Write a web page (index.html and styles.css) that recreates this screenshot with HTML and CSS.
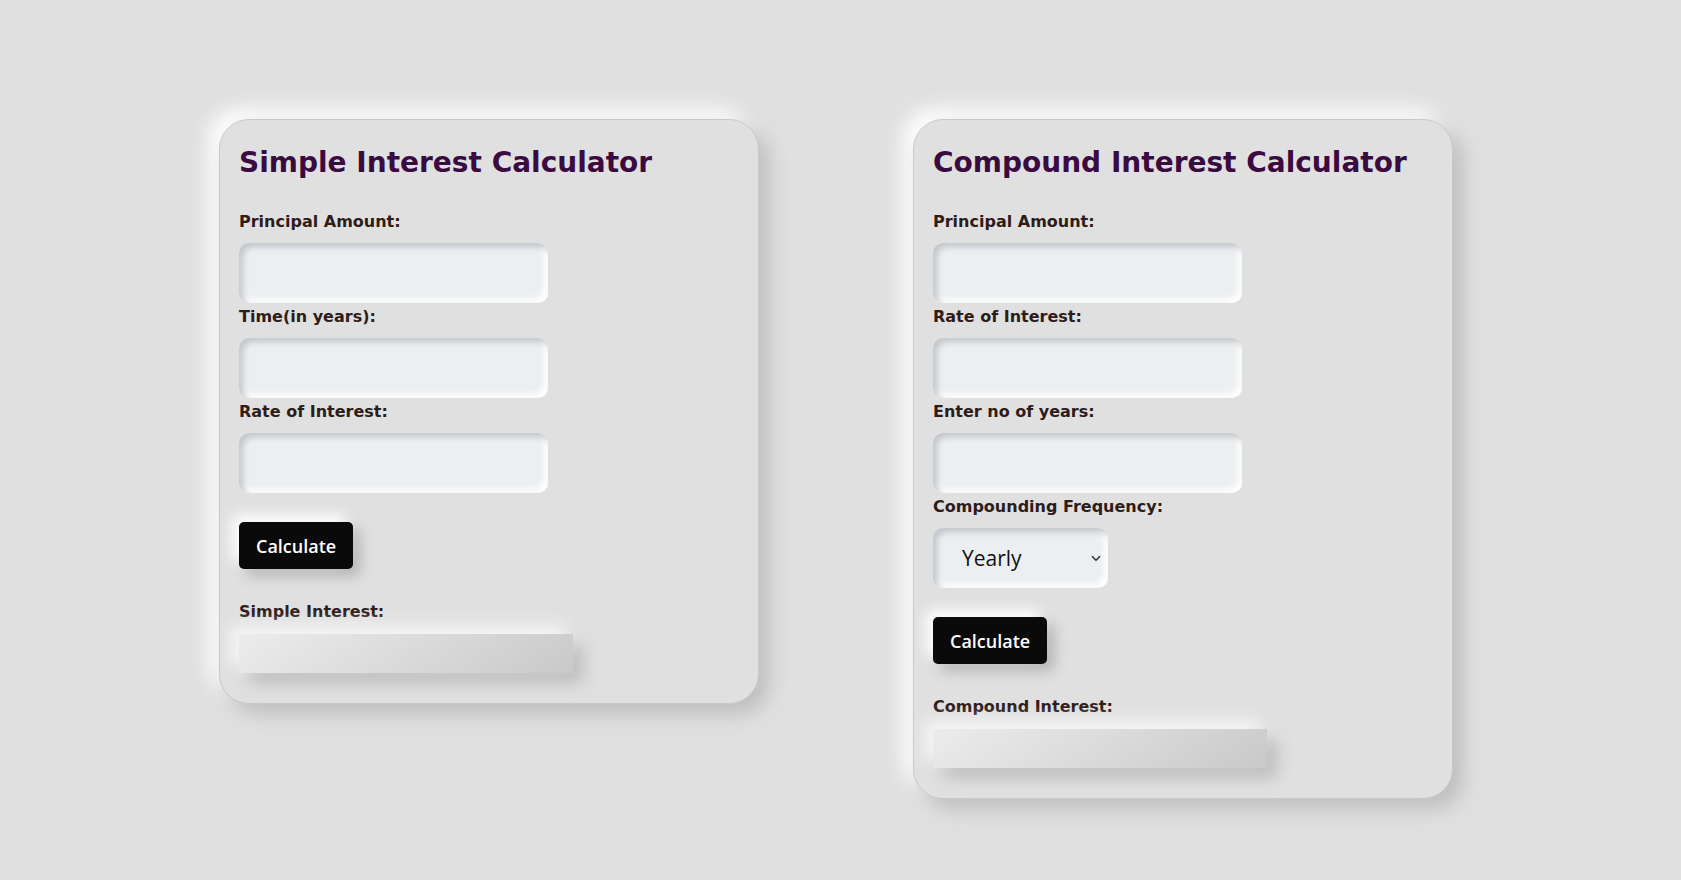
FILE: index.html
```html
<!DOCTYPE html>
<html lang="en">
<head>
<meta charset="utf-8">
<title>Interest Calculators</title>
<link rel="stylesheet" href="styles.css">
</head>
<body>
<main class="page">
  <section class="card">
    <h2 class="card-title">Simple Interest Calculator</h2>
    <label class="field-label" for="si-p">Principal Amount:</label>
    <input class="field-input" id="si-p" type="text">
    <label class="field-label" for="si-t">Time(in years):</label>
    <input class="field-input" id="si-t" type="text">
    <label class="field-label" for="si-r">Rate of Interest:</label>
    <input class="field-input" id="si-r" type="text">
    <button class="calc-btn" type="button">Calculate</button>
    <div class="result-label">Simple Interest:</div>
    <div class="result-box"></div>
  </section>

  <section class="card">
    <h2 class="card-title">Compound Interest Calculator</h2>
    <label class="field-label" for="ci-p">Principal Amount:</label>
    <input class="field-input" id="ci-p" type="text">
    <label class="field-label" for="ci-r">Rate of Interest:</label>
    <input class="field-input" id="ci-r" type="text">
    <label class="field-label" for="ci-n">Enter no of years:</label>
    <input class="field-input" id="ci-n" type="text">
    <label class="field-label" for="ci-f">Compounding Frequency:</label>
    <div class="select-wrap">
      <select class="field-select" id="ci-f">
        <option>Yearly</option>
        <option>Half-Yearly</option>
        <option>Quarterly</option>
        <option>Monthly</option>
      </select>
      <svg class="select-arrow" width="10" height="7" viewBox="0 0 10 7"><path d="M1 1.2 L5 5.2 L9 1.2" fill="none" stroke="#333" stroke-width="1.6"/></svg>
    </div>
    <button class="calc-btn" type="button">Calculate</button>
    <div class="result-label">Compound Interest:</div>
    <div class="result-box"></div>
  </section>
</main>
</body>
</html>
```

FILE: styles.css
```css
html, body {
  margin: 0;
  padding: 0;
  background: #e0e0e0;
}

body {
  font-family: "DejaVu Sans", sans-serif;
  min-height: 100vh;
}

.page {
  display: flex;
  align-items: flex-start;
  gap: 154px;
  padding: 119px 0 60px 219px;
  box-sizing: border-box;
}

.card {
  width: 540px;
  box-sizing: border-box;
  background: #e0e0e0;
  border: 1px solid #c9c9c9;
  border-radius: 30px;
  padding: 26px 20px 30px 19px;
  box-shadow: 10px 10px 20px #bebebe, -10px -10px 20px #ffffff;
  display: flex;
  flex-direction: column;
  align-items: flex-start;
}

.card-title {
  margin: 0 0 32px 0;
  font-size: 28px;
  line-height: 34px;
  font-weight: bold;
  color: #3a0b40;
}

.field-label,
.result-label {
  display: block;
  font-size: 16px;
  line-height: 19px;
  font-weight: bold;
  color: #2e1c18;
}

.field-input,
.field-select {
  display: block;
  box-sizing: border-box;
  height: 60px;
  border: none;
  outline: none;
  border-radius: 10px;
  background: #eceff1;
  box-shadow: inset 4px 4px 6px #c3c6ca, inset -4px -4px 6px #ffffff;
}

.field-input {
  width: 309px;
  margin: 12px 0 4px 0;
  padding: 0 16px;
  font-size: 18px;
}

.select-wrap {
  position: relative;
  margin: 12px 0 0 0;
}

.field-select {
  width: 175px;
  -webkit-appearance: none;
  appearance: none;
  padding: 0 0 0 29px;
  font-family: "Open Sans", "Noto Sans", sans-serif;
  font-size: 21px;
  color: #111;
}

.select-arrow {
  position: absolute;
  right: 7px;
  top: 27px;
  pointer-events: none;
}

.calc-btn {
  margin-top: 25px;
  height: 47px;
  padding: 0 17px;
  border: none;
  border-radius: 5px;
  background: #0a0a0a;
  color: #ffffff;
  font-family: "Open Sans", "Noto Sans", sans-serif;
  font-size: 18px;
  font-weight: 600;
  box-shadow: -7px -7px 14px #ffffff, 7px 7px 14px #b3b3b3;
}

.select-wrap + .calc-btn {
  margin-top: 29px;
}

.result-label {
  margin-top: 33px;
}

.result-box {
  margin-top: 13px;
  width: 334px;
  height: 39px;
  background: linear-gradient(145deg, #ececec, #c9c9c9);
  box-shadow: -8px -8px 16px #f7f7f7, 10px 10px 16px #bdbdbd;
}
```
